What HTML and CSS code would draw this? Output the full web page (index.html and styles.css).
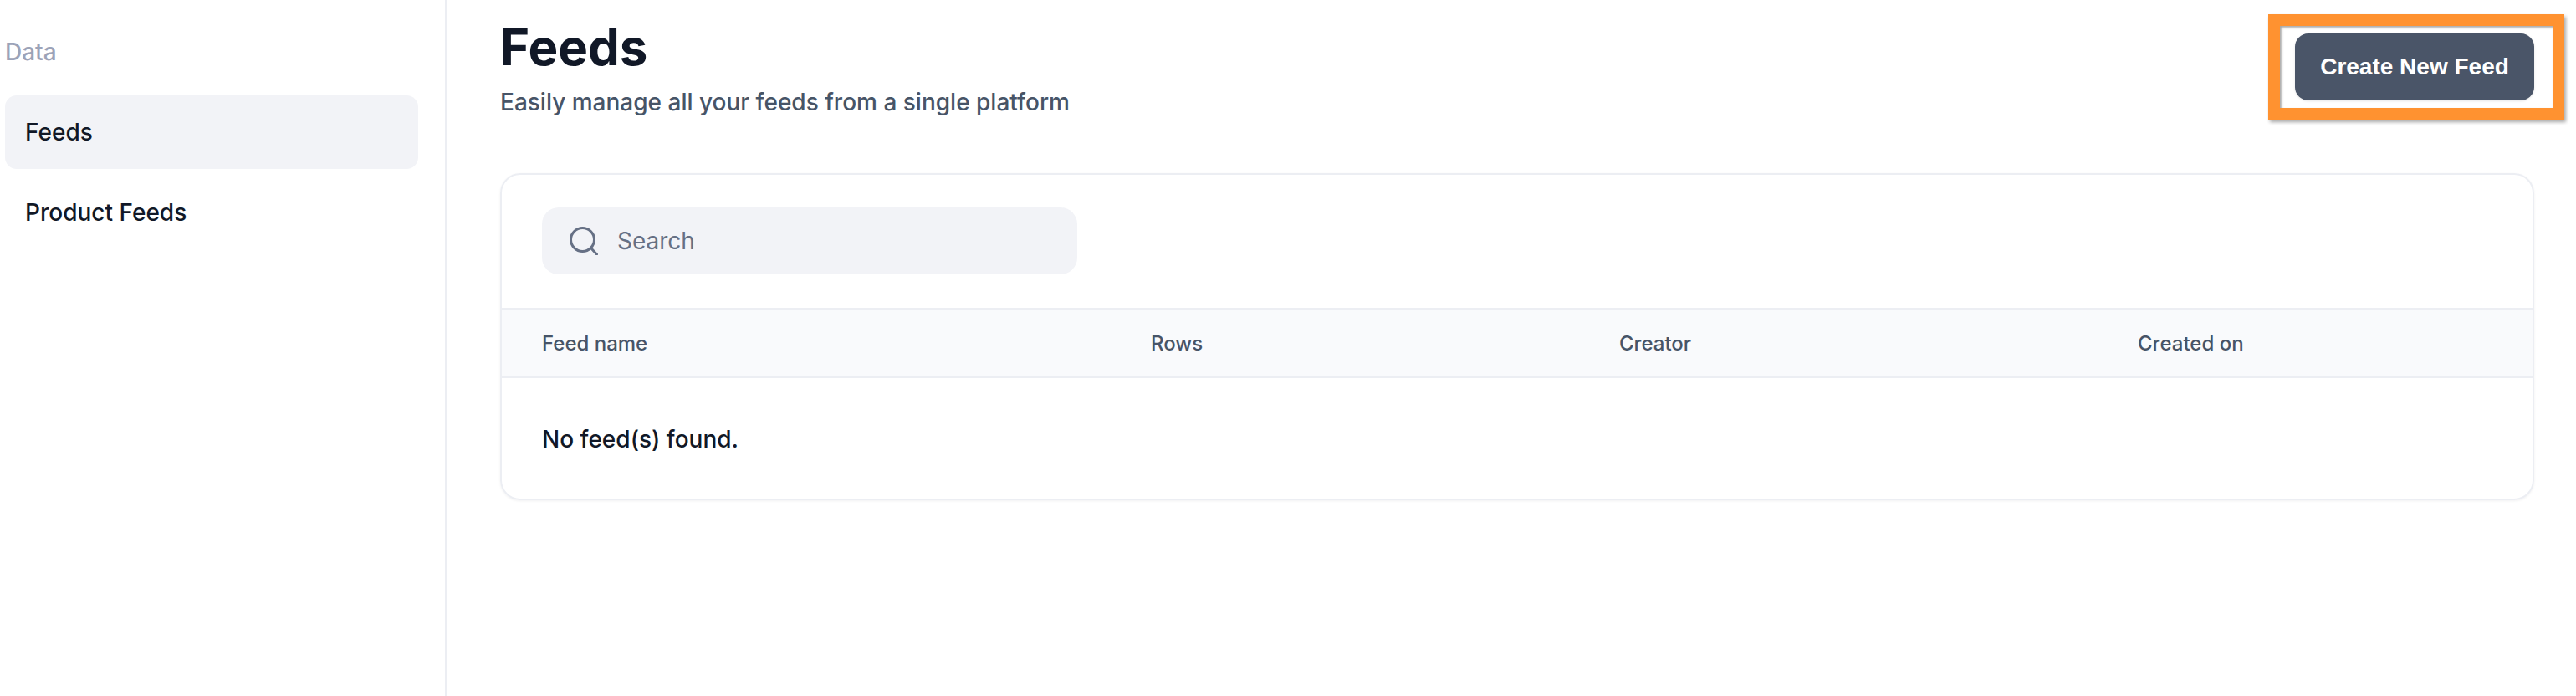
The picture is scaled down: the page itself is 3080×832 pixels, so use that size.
FILE: index.html
```html
<!DOCTYPE html>
<html lang="en">
<head>
  <meta charset="UTF-8" />
  <meta name="viewport" content="width=device-width, initial-scale=1.0"/>
  <title>Feeds</title>
  <link rel="stylesheet" href="styles.css">
</head>
<body>
  <aside class="sidebar">
    <p class="sidebar-title">Data</p>
    <a class="sidebar-link active">Feeds</a>
    <a class="sidebar-link">Product Feeds</a>
  </aside>

  <main class="content">
    <header class="page-header">
      <div>
        <h1>Feeds</h1>
        <p class="subtitle">Easily manage all your feeds from a single platform</p>
      </div>
      <button class="create-btn">Create New Feed</button>
      <div class="highlight"></div>
    </header>

    <section class="card">
      <div class="toolbar">
        <div class="search">
          <svg class="search-icon" viewBox="0 0 34 34" fill="none" stroke="#667085" stroke-width="3" stroke-linecap="round">
            <circle cx="15.5" cy="15.5" r="14"/>
            <path d="M25.5 25.5l7 7.5"/>
          </svg>
          <span>Search</span>
        </div>
      </div>
      <div class="table-head">
        <span>Feed name</span>
        <span>Rows</span>
        <span>Creator</span>
        <span>Created on</span>
      </div>
      <p class="empty">No feed(s) found.</p>
    </section>
  </main>
</body>
</html>
```

FILE: styles.css
```css
* {
  box-sizing: border-box;
}

body {
  font-family: 'Inter', 'Liberation Sans', sans-serif;
  margin: 0;
  height: 832px;
  overflow: hidden;
  background: #fff;
  color: #111827;
  display: flex;
}

.sidebar {
  width: 534px;
  flex-shrink: 0;
  border-right: 2px solid #eceef3;
  padding: 44px 32px 0 6px;
}

.sidebar-title {
  margin: 0 0 34px;
  font-size: 28px;
  line-height: 36px;
  font-weight: 500;
  color: #9ca3b8;
}

.sidebar-link {
  display: block;
  height: 88px;
  line-height: 88px;
  margin-bottom: 8px;
  padding-left: 24px;
  font-size: 28px;
  font-weight: 500;
  border-radius: 14px;
}

.sidebar-link.active {
  background: #f2f3f7;
}

.content {
  flex: 1;
  padding: 0 50px 0 64px;
}

.page-header {
  position: relative;
  display: flex;
  justify-content: space-between;
  align-items: flex-start;
  height: 207px;
}

h1 {
  margin: 22px 0 0;
  font-size: 60px;
  line-height: 68px;
  font-weight: 700;
}

.subtitle {
  margin: 14px 0 0;
  font-size: 28px;
  line-height: 36px;
  font-weight: 500;
  color: #475467;
}

.create-btn {
  margin-top: 40px;
  width: 286px;
  height: 80px;
  border: none;
  border-radius: 16px;
  background: #4a5568;
  color: #fff;
  font-family: 'Liberation Sans', sans-serif;
  font-size: 28px;
  font-weight: 700;
  box-shadow: 0 1px 3px rgba(0, 0, 0, 0.1);
}

/* annotation box round the button */
.highlight {
  position: absolute;
  top: 17px;
  right: -36px;
  width: 354px;
  height: 126px;
  border: 14px solid #ff9230;
  box-shadow: 2px 3px 4px rgba(0, 0, 0, 0.35), inset 2px 2px 3px rgba(0, 0, 0, 0.35);
}

.card {
  border: 2px solid #eceef3;
  border-radius: 24px;
  box-shadow: 0 1px 3px rgba(16, 24, 40, 0.06);
  overflow: hidden;
}

.toolbar {
  height: 159px;
  padding: 39px 48px 0;
}

.search {
  display: flex;
  align-items: center;
  width: 640px;
  height: 80px;
  padding-left: 33px;
  background: #f2f3f7;
  border-radius: 20px;
  font-size: 28px;
  color: #667085;
}

.search-icon {
  width: 34px;
  height: 34px;
  margin-right: 23px;
}

.table-head {
  display: grid;
  grid-template-columns: 728px 560px 620px 1fr;
  align-items: center;
  height: 84px;
  padding-left: 48px;
  background: #f9fafc;
  border-top: 2px solid #eceef3;
  border-bottom: 2px solid #eceef3;
  font-size: 24px;
  font-weight: 500;
  color: #475467;
}

.empty {
  margin: 0;
  height: 144px;
  padding: 55px 0 0 48px;
  font-size: 28px;
  line-height: 36px;
  font-weight: 500;
}
```
